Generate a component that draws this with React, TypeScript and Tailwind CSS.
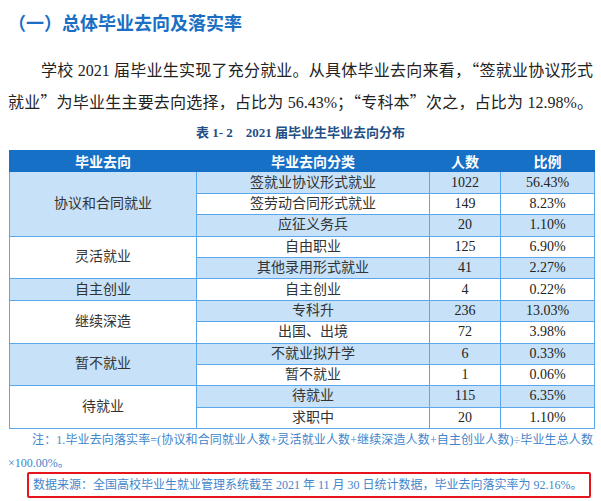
import React from "react";

type Row = { cat: string; n: string; p: string };
type Group = { name: string; rows: Row[] };

const groups: Group[] = [
  {
    name: "协议和合同就业",
    rows: [
      { cat: "签就业协议形式就业", n: "1022", p: "56.43%" },
      { cat: "签劳动合同形式就业", n: "149", p: "8.23%" },
      { cat: "应征义务兵", n: "20", p: "1.10%" },
    ],
  },
  {
    name: "灵活就业",
    rows: [
      { cat: "自由职业", n: "125", p: "6.90%" },
      { cat: "其他录用形式就业", n: "41", p: "2.27%" },
    ],
  },
  { name: "自主创业", rows: [{ cat: "自主创业", n: "4", p: "0.22%" }] },
  {
    name: "继续深造",
    rows: [
      { cat: "专科升", n: "236", p: "13.03%" },
      { cat: "出国、出境", n: "72", p: "3.98%" },
    ],
  },
  {
    name: "暂不就业",
    rows: [
      { cat: "不就业拟升学", n: "6", p: "0.33%" },
      { cat: "暂不就业", n: "1", p: "0.06%" },
    ],
  },
  {
    name: "待就业",
    rows: [
      { cat: "待就业", n: "115", p: "6.35%" },
      { cat: "求职中", n: "20", p: "1.10%" },
    ],
  },
];

const serif = "font-['Liberation_Serif','Noto_Sans_CJK_SC',serif]";
const cell = "border border-[#5aa7ec] text-center text-[14px] leading-[16px] p-0";
const q = "font-['Noto_Sans_CJK_SC',sans-serif]";

export default function App() {
  let idx = 0;
  const body: React.ReactNode[] = [];
  groups.forEach((g, gi) => {
    g.rows.forEach((r, ri) => {
      const light = idx % 2 === 0;
      const rowBg = light ? "bg-[#c6e1f8]" : "bg-white";
      body.push(
        <tr key={idx} className="h-[21.4px]">
          {ri === 0 && (
            <td
              rowSpan={g.rows.length}
              className={`${cell} text-[#333] ${gi % 2 === 0 ? "bg-[#c6e1f8]" : "bg-white"}`}
            >
              {g.name}
            </td>
          )}
          <td className={`${cell} text-[#333] ${rowBg}`}>{r.cat}</td>
          <td className={`${cell} text-[#222] ${rowBg}`}>{r.n}</td>
          <td className={`${cell} text-[#222] ${rowBg}`}>{r.p}</td>
        </tr>
      );
      idx++;
    });
  });

  return (
    <div className={`w-[601px] h-[501px] bg-white overflow-hidden ${serif}`}>
      <div className="pt-[10px] pl-[8px] text-[18px] leading-[24px] font-bold text-[#1a6fc4] font-['Noto_Sans_CJK_SC',sans-serif]">
        （一）总体毕业去向及落实率
      </div>
      <div className="mt-[20px] px-[8px] text-[16px] leading-[31px] text-[#222]">
        <div className="whitespace-nowrap text-justify [text-align-last:justify] pl-[33px]">
          学校 2021 届毕业生实现了充分就业。从具体毕业去向来看，<span className={q}>“</span>签就业协议形式
        </div>
        <div className="whitespace-nowrap text-justify [text-align-last:justify]">
          就业<span className={q}>”</span>为毕业生主要去向选择，占比为 56.43%；<span className={q}>“</span>专科本<span className={q}>”</span>次之，占比为 12.98%。
        </div>
      </div>
      <div className="mt-[5px] text-center text-[13px] leading-[20px] font-bold text-[#1f4f86]">
        表 1- 2&nbsp;&nbsp;&nbsp;&nbsp;2021 届毕业生毕业去向分布
      </div>
      <table className="mt-[7px] ml-[9px] w-[585px] table-fixed border-collapse">
        <colgroup>
          <col className="w-[187px]" />
          <col className="w-[233px]" />
          <col className="w-[71px]" />
          <col className="w-[94px]" />
        </colgroup>
        <thead>
          <tr className="h-[21.4px] bg-[#1570c6] text-white font-['Noto_Sans_CJK_SC',sans-serif]">
            <th className="border border-[#1570c6] font-bold text-[14px] leading-[16px] p-0">毕业去向</th>
            <th className="border border-[#1570c6] font-bold text-[14px] leading-[16px] p-0">毕业去向分类</th>
            <th className="border border-[#1570c6] font-bold text-[14px] leading-[16px] p-0">人数</th>
            <th className="border border-[#1570c6] font-bold text-[14px] leading-[16px] p-0">比例</th>
          </tr>
        </thead>
        <tbody>{body}</tbody>
      </table>
      <div className="px-[8px] text-[12px] leading-[23px] text-[#3f86cc]">
        <div className="whitespace-nowrap text-justify [text-align-last:justify] pl-[24px]">
          注：1.毕业去向落实率=(协议和合同就业人数+灵活就业人数+继续深造人数+自主创业人数)÷毕业生总人数
        </div>
        <div>×100.00%。</div>
      </div>
      <div className="ml-[27px] mt-[-3px] w-[564px] h-[26px] border-2 border-[#e8141b] rounded-[2px] flex items-center pl-[4px] text-[12px] text-[#3f86cc] whitespace-nowrap">
        数据来源：全国高校毕业生就业管理系统截至 2021 年 11 月 30 日统计数据，毕业去向落实率为 92.16%。
      </div>
    </div>
  );
}
